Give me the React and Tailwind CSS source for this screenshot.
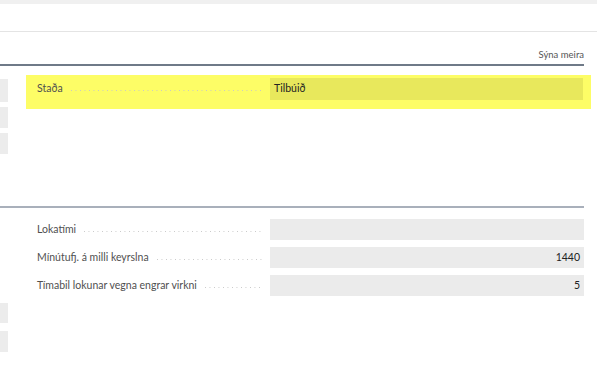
export default function App() {
  const font = { fontFamily: 'Lato, "Open Sans", sans-serif' };
  const Leader = () => (
    <span className="flex-1 h-px ml-[8px] mr-[7px] mt-[3px] bg-[linear-gradient(to_right,#c8c8c8_1px,transparent_1px)] bg-[length:4.5px_1px] bg-repeat-x" />
  );
  const Row = ({ label, value }) => (
    <div className="flex items-center h-[21px]">
      <div className="w-[233px] flex items-center text-[10.5px] text-[#505050] pr-[1px]">
        <span className="whitespace-nowrap">{label}</span>
        <Leader />
      </div>
      <div className="w-[314px] h-[21px] flex items-center justify-end px-[4px] text-[10.5px] text-[#222] bg-[#ebebeb]">
        {value}
      </div>
    </div>
  );
  return (
    <div className="w-[608px] h-[387px] bg-white overflow-hidden relative" style={font}>
      <div className="w-[597px] h-[4px] bg-[#f0f0f0]" />
      <div className="w-[597px] h-[27px]" />
      <div className="w-[597px] h-px bg-[#e4e4e4]" />
      <div className="w-[584px] h-[32px] flex items-end justify-end pb-[2px]">
        <span className="text-[9.5px] text-[#555]">Sýna meira</span>
      </div>
      <div className="w-[584px] h-[2px] bg-[#6f7a88]" />
      <div className="flex">
        <div className="w-[8px] flex flex-col gap-[5px] pt-[13px]">
          <div className="h-[23px] bg-[#ececec]" />
          <div className="h-[21px] bg-[#ececec]" />
          <div className="h-[21px] bg-[#ececec]" />
        </div>
        <div className="ml-[18px] mt-[9px] w-[565px] h-[34px] bg-[#fdfd66] pl-[11px] pt-[3px]">
          <div className="flex items-center h-[22px]">
            <div className="w-[233px] flex items-center text-[10.5px] text-[#505050]">
              <span className="whitespace-nowrap">Staða</span>
              <Leader />
            </div>
            <div className="w-[313px] h-[22px] flex items-center px-[4px] text-[10.5px] text-[#222] bg-[#e8e85c]">
              Tilbúið
            </div>
          </div>
        </div>
      </div>
      <div className="h-[52px]" />
      <div className="w-[584px] h-[2px] bg-[#a9b0bb]" />
      <div className="flex flex-col gap-[7px] pt-[11px] pl-[37px]">
        <Row label="Lokatími" value="" />
        <Row label="Mínútufj. á milli keyrslna" value="1440" />
        <Row label="Tímabil lokunar vegna engrar virkni" value="5" />
      </div>
      <div className="flex flex-col gap-[8px] pt-[7px] w-[8px]">
        <div className="h-[20px] bg-[#ececec]" />
        <div className="h-[21px] bg-[#ececec]" />
      </div>
    </div>
  );
}
